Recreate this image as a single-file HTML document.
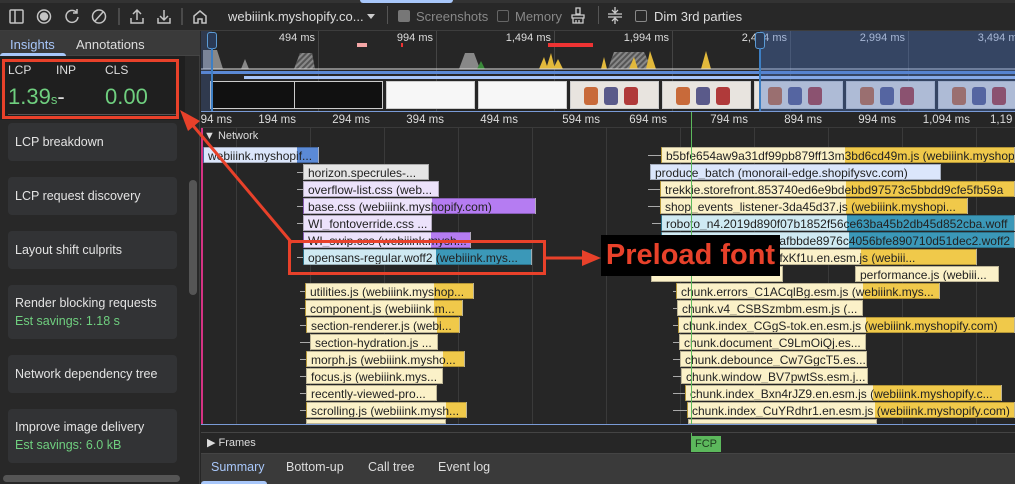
<!DOCTYPE html>
<html><head><meta charset="utf-8"><style>
*{margin:0;padding:0;box-sizing:border-box}
body{width:1015px;height:484px;overflow:hidden;background:#262626;font-family:"Liberation Sans",sans-serif;position:relative;color:#e3e3e3}
.a{position:absolute}
.t{font-size:13px;color:#ddd;white-space:nowrap}
.card{position:absolute;left:8px;width:169px;background:#323335;border-radius:4px}
.card span{position:absolute;left:7px;font-size:12.5px;color:#e3e3e3;white-space:nowrap}
.card .g{color:#6fcf7f}
.bar{position:absolute;height:16px;font-size:12px;line-height:16px;color:#222;white-space:nowrap;overflow:hidden;padding-left:4px;border:1px solid rgba(0,0,0,.25)}
.wh{position:absolute;height:1px;background:#aaa}
.lbl{position:absolute;font-size:11px;color:#ddd;white-space:nowrap;text-align:right}
.gl{position:absolute;width:1px;background:#3a3a3a}
.ss{position:absolute;top:81px;height:28px;width:89px;border:1px solid #ccc}
</style></head><body>
<!-- top toolbar -->
<div class="a" style="left:0;top:0;width:1015px;height:31px;background:#282828;border-bottom:1px solid #3d3d3d"></div>
<div class="a" style="left:0;top:0;width:1015px;height:3px;background:#333"></div>
<div class="a" style="left:360px;top:0;width:93px;height:3px;background:#a8c7fa;border-radius:0 0 3px 3px"></div>
<svg class="a" style="left:0;top:3px" width="215" height="28" fill="none" stroke="#c4c4c4" stroke-width="1.5">
<rect x="10" y="7" width="13" height="13" rx="1"/><line x1="15" y1="7" x2="15" y2="20"/>
<circle cx="44" cy="13.5" r="6.5"/><circle cx="44" cy="13.5" r="3.5" fill="#c4c4c4"/>
<path d="M77 10a6 6 0 1 0 1 4M77 6v4h-4"/>
<circle cx="99" cy="13.5" r="6.5"/><line x1="95" y1="18" x2="103" y2="9"/>
<line x1="119" y1="5" x2="119" y2="22" stroke="#555"/>
<path d="M131 15v5h12v-5M137 17V7M133 11l4-4 4 4"/>
<path d="M158 15v5h12v-5M164 7v10M160 13l4 4 4-4"/>
<line x1="182" y1="5" x2="182" y2="22" stroke="#555"/>
<path d="M194 20v-7l6-5 6 5v7h-4v-4h-4v4z"/>
</svg>
<div class="a t" style="left:228px;top:9px;color:#ddd">webiiink.myshopify.co...</div>
<div class="a" style="left:367px;top:14px;border:4px solid transparent;border-top:5px solid #ccc"></div>
<div class="a" style="left:387px;top:6px;width:1px;height:18px;background:#555"></div>
<div class="a" style="left:398px;top:10px;width:12px;height:12px;background:#777;border-radius:2px"></div>
<div class="a t" style="left:416px;top:9px;color:#888">Screenshots</div>
<div class="a" style="left:497px;top:10px;width:12px;height:12px;border:1px solid #666;border-radius:2px"></div>
<div class="a t" style="left:515px;top:9px;color:#888">Memory</div>
<svg class="a" style="left:570px;top:7px" width="16" height="17" fill="none" stroke="#ccc" stroke-width="1.3"><rect x="6" y="1" width="4" height="6"/><path d="M2 8h12v3H2zM3 11v5h10v-5M6 13v3M9 13v3"/></svg>
<div class="a" style="left:598px;top:6px;width:1px;height:18px;background:#555"></div>
<svg class="a" style="left:607px;top:6px" width="16" height="19" fill="none" stroke="#ccc" stroke-width="1.3"><path d="M1 8h14M1 11h14M8 1v5M5 4l3 3 3-3M8 18v-5M5 15l3-3 3 3"/></svg>
<div class="a" style="left:635px;top:10px;width:12px;height:12px;border:1px solid #888;border-radius:2px"></div>
<div class="a t" style="left:654px;top:9px">Dim 3rd parties</div>

<!-- left panel -->
<div class="a" style="left:0;top:31px;width:200px;height:453px;background:#282828;border-right:1px solid #3d3d3d"></div>
<div class="a" style="left:0;top:31px;width:200px;height:25px;background:#3a3a3a;border-bottom:1px solid #444"></div>
<div class="a t" style="left:10px;top:37px;color:#a8c7fa">Insights</div>
<div class="a" style="left:0;top:53px;width:66px;height:3px;background:#a8c7fa;border-radius:3px 3px 0 0"></div>
<div class="a t" style="left:76px;top:37px">Annotations</div>
<div class="a" style="left:0;top:56px;width:185px;height:64px;background:#1f1f1f"></div>
<div class="a t" style="left:8px;top:63px;font-size:12px">LCP</div>
<div class="a t" style="left:56px;top:63px;font-size:12px">INP</div>
<div class="a t" style="left:105px;top:63px;font-size:12px">CLS</div>
<div class="a" style="left:8px;top:84px;font-size:22px;color:#6fcf7f">1.39<span style="font-size:13px">s</span><span style="color:#ddd">-</span></div>
<div class="a" style="left:105px;top:84px;font-size:22px;color:#6fcf7f">0.00</div>
<div class="a" style="left:8px;top:114px;width:169px;height:1px;background:#555"></div>
<div class="a" style="left:2px;top:59px;width:177px;height:60px;border:3px solid #e8412a"></div>
<div class="card" style="top:123px;height:38px"><span style="top:12px">LCP breakdown</span></div>
<div class="card" style="top:177px;height:38px"><span style="top:12px">LCP request discovery</span></div>
<div class="card" style="top:231px;height:38px"><span style="top:12px">Layout shift culprits</span></div>
<div class="card" style="top:285px;height:54px"><span style="top:11px">Render blocking requests</span><span class="g" style="top:29px">Est savings: 1.18 s</span></div>
<div class="card" style="top:355px;height:38px"><span style="top:12px">Network dependency tree</span></div>
<div class="card" style="top:409px;height:54px"><span style="top:11px">Improve image delivery</span><span class="g" style="top:29px">Est savings: 6.0 kB</span></div>
<div class="a" style="left:189px;top:180px;width:8px;height:115px;background:#555;border-radius:4px"></div>
<div class="a" style="left:3px;top:475px;width:177px;height:7px;background:#555;border-radius:4px"></div>

<!-- overview -->
<div class="a" style="left:201px;top:31px;width:814px;height:80px;background:#262626"></div>
<div class="gl" style="left:318px;top:31px;height:80px;background:#444"></div>
<div class="gl" style="left:436px;top:31px;height:80px;background:#444"></div>
<div class="gl" style="left:554px;top:31px;height:80px;background:#444"></div>
<div class="gl" style="left:672px;top:31px;height:80px;background:#444"></div>
<div class="gl" style="left:790px;top:31px;height:80px;background:#444"></div>
<div class="gl" style="left:908px;top:31px;height:80px;background:#444"></div>
<div class="lbl" style="left:270px;top:32px;width:45px">494 ms</div>
<div class="lbl" style="left:388px;top:32px;width:45px">994 ms</div>
<div class="lbl" style="left:500px;top:32px;width:51px">1,494 ms</div>
<div class="lbl" style="left:618px;top:32px;width:51px">1,994 ms</div>
<div class="lbl" style="left:736px;top:32px;width:51px">2,494 ms</div>
<div class="lbl" style="left:854px;top:32px;width:51px">2,994 ms</div>
<div class="lbl" style="left:972px;top:32px;width:51px">3,494 ms</div>
<svg class="a" style="left:201px;top:44px" width="814" height="26">
<path d="M2 25V6h14l6 19zM40 25l4-10 4 10zM93 25l6-16h12l3 16zM258 25l6-16h9l6 16zM407 25l6-17h30l8 17z" fill="#888"/>
<path d="M93 25l6-16h12l3 16zM407 25l6-17h30l8 17z" fill="url(#h)"/>
<path d="M338 25l5-12 4 12zM345 25l5-16 4 16zM352 25l5-10 5 10zM400 25l3-12 3 12zM428 25l5-12 4 12zM445 25l4-18 6 18zM500 25l5-18 5 18z" fill="#e2b93b"/>
<path d="M276 25l4-8 4 8z" fill="#3a8a3a"/>
<line x1="0" y1="25" x2="814" y2="25" stroke="#ddd" stroke-width="1"/>
<defs><pattern id="h" width="4" height="4" patternUnits="userSpaceOnUse" patternTransform="rotate(45)"><rect width="2" height="4" fill="#555"/></pattern></defs>
</svg>
<div class="a" style="left:357px;top:43px;width:10px;height:4px;background:#f4a6a6"></div>
<div class="a" style="left:401px;top:43px;width:2px;height:4px;background:#e33"></div>
<div class="a" style="left:548px;top:43px;width:45px;height:4px;background:#e33"></div>
<div class="a" style="left:201px;top:71px;width:814px;height:3px;background:#5b8ad6"></div>
<div class="a" style="left:244px;top:76px;width:771px;height:3px;background:#a8c7fa"></div>
<div class="ss" style="left:210px;background:#111"></div>
<div class="ss" style="left:294px;background:#111;width:89px"></div>
<div class="ss" style="left:386px;background:#f7f7f7"></div>
<div class="ss" style="left:478px;background:#f7f7f7"></div>
<div class="ss" style="left:570px;background:#e8e4df"></div>
<div class="ss" style="left:662px;background:#e8e4df"></div>
<div class="ss" style="left:754px;background:#e8e4df"></div>
<div class="ss" style="left:846px;background:#e8e4df"></div>
<div class="ss" style="left:938px;background:#e8e4df"></div>
<svg class="a" style="left:570px;top:83px" width="445" height="24">
<g id="p"><rect x="14" y="4" width="14" height="18" rx="3" fill="#c86a3a"/><rect x="34" y="4" width="14" height="18" rx="3" fill="#5a5a8a"/><rect x="54" y="4" width="14" height="18" rx="3" fill="#b03a3a"/></g>
<use href="#p" x="92"/><use href="#p" x="184"/><use href="#p" x="276"/><use href="#p" x="368"/>
</svg>
<div class="a" style="left:760px;top:31px;width:255px;height:80px;background:rgba(80,120,200,.38)"></div>
<div class="a" style="left:201px;top:31px;width:11px;height:80px;background:rgba(80,120,200,.25)"></div>
<div class="a" style="left:207px;top:32px;width:10px;height:17px;border:1px solid #5b9bd5;border-radius:3px;background:#2a3a55"></div>
<div class="a" style="left:211px;top:48px;width:2px;height:63px;background:#3d7fc4"></div>
<div class="a" style="left:755px;top:32px;width:10px;height:17px;border:1px solid #5b9bd5;border-radius:3px;background:#2a3a55"></div>
<div class="a" style="left:759px;top:48px;width:2px;height:63px;background:#3d7fc4"></div>
<div class="a" style="left:201px;top:111px;width:814px;height:1px;background:#7a9bd6"></div>

<!-- ruler -->
<div class="a" style="left:201px;top:112px;width:814px;height:16px;background:#262626;border-bottom:1px solid #3a3a3a"></div>
<div class="lbl" style="left:190px;top:114px;width:42px;font-size:11.5px">94 ms</div>
<div class="lbl" style="left:250px;top:114px;width:46px;font-size:11.5px">194 ms</div>
<div class="lbl" style="left:324px;top:114px;width:46px;font-size:11.5px">294 ms</div>
<div class="lbl" style="left:398px;top:114px;width:46px;font-size:11.5px">394 ms</div>
<div class="lbl" style="left:472px;top:114px;width:46px;font-size:11.5px">494 ms</div>
<div class="lbl" style="left:554px;top:114px;width:46px;font-size:11.5px">594 ms</div>
<div class="lbl" style="left:621px;top:114px;width:46px;font-size:11.5px">694 ms</div>
<div class="lbl" style="left:702px;top:114px;width:46px;font-size:11.5px">794 ms</div>
<div class="lbl" style="left:776px;top:114px;width:46px;font-size:11.5px">894 ms</div>
<div class="lbl" style="left:850px;top:114px;width:46px;font-size:11.5px">994 ms</div>
<div class="lbl" style="left:915px;top:114px;width:55px;font-size:11.5px">1,094 ms</div>
<div class="lbl" style="left:990px;top:114px;width:40px;font-size:11.5px;text-align:left">1,19</div>

<!-- grid lines network -->
<div class="gl" style="left:236px;top:128px;height:297px"></div>
<div class="gl" style="left:310px;top:128px;height:297px"></div>
<div class="gl" style="left:384px;top:128px;height:297px"></div>
<div class="gl" style="left:458px;top:128px;height:297px"></div>
<div class="gl" style="left:532px;top:128px;height:297px"></div>
<div class="gl" style="left:606px;top:128px;height:297px"></div>
<div class="gl" style="left:680px;top:128px;height:297px"></div>
<div class="gl" style="left:754px;top:128px;height:297px"></div>
<div class="gl" style="left:828px;top:128px;height:297px"></div>
<div class="gl" style="left:902px;top:128px;height:297px"></div>
<div class="gl" style="left:976px;top:128px;height:297px"></div>
<div class="a" style="left:201px;top:128px;width:2px;height:296px;background:#d63384"></div>
<div class="a" style="left:204px;top:130px;font-size:11px;color:#ddd">▼ Network</div>

<!-- left bars -->
<div class="bar" style="left:203px;top:147px;width:116px;background:linear-gradient(90deg,#dbe6fb 0 93px,#5b8ad6 93px)">webiiink.myshopif...</div>
<div class="wh" style="left:297px;top:172px;width:7px"></div><div class="bar" style="left:303px;top:164px;width:126px;background:#e5e5e5">horizon.specrules-...</div>
<div class="wh" style="left:297px;top:189px;width:7px"></div><div class="bar" style="left:303px;top:181px;width:136px;background:#ece2fb">overflow-list.css (web...</div>
<div class="wh" style="left:297px;top:206px;width:7px"></div><div class="bar" style="left:303px;top:198px;width:233px;background:linear-gradient(90deg,#ece2fb 0 128px,#b57cf2 128px)">base.css (webiiink.myshopify.com)</div>
<div class="wh" style="left:297px;top:223px;width:7px"></div><div class="bar" style="left:303px;top:215px;width:129px;background:#ece2fb">WI_fontoverride.css ...</div>
<div class="wh" style="left:297px;top:240px;width:7px"></div><div class="bar" style="left:303px;top:232px;width:168px;background:linear-gradient(90deg,#ece2fb 0 127px,#b57cf2 127px)">WI_swip.css (webiiink.mysh...</div>
<div class="wh" style="left:297px;top:257px;width:7px"></div><div class="bar" style="left:303px;top:249px;width:229px;background:linear-gradient(90deg,#cfeaf3 0 132px,#3b98b8 132px)">opensans-regular.woff2 (webiiink.mys...</div>
<div class="wh" style="left:300px;top:291px;width:6px"></div><div class="bar" style="left:305px;top:283px;width:169px;background:linear-gradient(90deg,#fbf1c8 0 128px,#f0c94a 128px)">utilities.js (webiiink.myshop...</div>
<div class="wh" style="left:300px;top:308px;width:6px"></div><div class="bar" style="left:305px;top:300px;width:158px;background:linear-gradient(90deg,#fbf1c8 0 128px,#f0c94a 128px)">component.js (webiiink.m...</div>
<div class="wh" style="left:300px;top:325px;width:6px"></div><div class="bar" style="left:306px;top:317px;width:154px;background:linear-gradient(90deg,#fbf1c8 0 130px,#f0c94a 130px)">section-renderer.js (webi...</div>
<div class="wh" style="left:300px;top:342px;width:10px"></div><div class="bar" style="left:310px;top:334px;width:128px;background:#fbf1c8">section-hydration.js ...</div>
<div class="wh" style="left:300px;top:359px;width:6px"></div><div class="bar" style="left:306px;top:351px;width:159px;background:linear-gradient(90deg,#fbf1c8 0 136px,#f0c94a 136px)">morph.js (webiiink.mysho...</div>
<div class="wh" style="left:300px;top:376px;width:6px"></div><div class="bar" style="left:306px;top:368px;width:137px;background:#fbf1c8">focus.js (webiiink.mys...</div>
<div class="wh" style="left:300px;top:393px;width:6px"></div><div class="bar" style="left:306px;top:385px;width:131px;background:#fbf1c8">recently-viewed-pro...</div>
<div class="wh" style="left:300px;top:410px;width:6px"></div><div class="bar" style="left:306px;top:402px;width:161px;background:linear-gradient(90deg,#fbf1c8 0 139px,#f0c94a 139px)">scrolling.js (webiiink.mysh...</div>
<div class="wh" style="left:300px;top:427px;width:6px"></div><div class="bar" style="left:306px;top:419px;width:140px;height:5px;background:#fbf1c8"></div>

<!-- right bars -->
<div class="wh" style="left:648px;top:155px;width:13px"></div><div class="bar" style="left:661px;top:147px;width:354px;background:linear-gradient(90deg,#fbf1c8 0 183px,#f0c94a 183px)">b5bfe654aw9a31df99pb879ff13m3bd6cd49m.js (webiiink.myshop</div>
<div class="bar" style="left:650px;top:164px;width:291px;background:#dbe6fb">produce_batch (monorail-edge.shopifysvc.com)</div>
<div class="wh" style="left:648px;top:189px;width:13px"></div><div class="bar" style="left:660px;top:181px;width:355px;background:linear-gradient(90deg,#fbf1c8 0 185px,#f0c94a 185px)">trekkie.storefront.853740ed6e9bdebbd97573c5bbdd9cfe5fb59a</div>
<div class="wh" style="left:648px;top:206px;width:13px"></div><div class="bar" style="left:660px;top:198px;width:308px;background:linear-gradient(90deg,#fbf1c8 0 185px,#f0c94a 185px)">shop_events_listener-3da45d37.js (webiiink.myshopi...</div>
<div class="wh" style="left:652px;top:223px;width:9px"></div><div class="bar" style="left:661px;top:215px;width:354px;background:linear-gradient(90deg,#cfeaf3 0 185px,#3b98b8 185px)">roboto_n4.2019d890f07b1852f56ce63ba45b2db45d852cba.woff</div>
<div class="bar" style="left:661px;top:232px;width:354px;background:linear-gradient(90deg,#cfeaf3 0 187px,#3b98b8 187px)">roboto_n7.9f9ac48a9afbbde8976c4056bfe890710d51dec2.woff2</div>
<div class="bar" style="left:655px;top:249px;width:322px;background:linear-gradient(90deg,#fbf1c8 0 205px,#f0c94a 205px)">----------------button_CpfxKf1u.en.esm.js (webiii...</div>
<div class="bar" style="left:855px;top:266px;width:144px;background:#fbf1c8">performance.js (webiii...</div>
<div class="bar" style="left:651px;top:266px;width:132px;background:#fbf1c8"></div>
<div class="wh" style="left:673px;top:291px;width:4px"></div><div class="bar" style="left:676px;top:283px;width:264px;background:linear-gradient(90deg,#fbf1c8 0 186px,#f0c94a 186px)">chunk.errors_C1ACqlBg.esm.js (webiiink.mys...</div>
<div class="wh" style="left:673px;top:308px;width:4px"></div><div class="bar" style="left:677px;top:300px;width:186px;background:#fbf1c8">chunk.v4_CSBSzmbm.esm.js (...</div>
<div class="wh" style="left:673px;top:325px;width:5px"></div><div class="bar" style="left:678px;top:317px;width:337px;background:linear-gradient(90deg,#fbf1c8 0 187px,#f0c94a 187px)">chunk.index_CGgS-tok.en.esm.js (webiiink.myshopify.com)</div>
<div class="wh" style="left:673px;top:342px;width:6px"></div><div class="bar" style="left:679px;top:334px;width:187px;background:#fbf1c8">chunk.document_C9LmOiQj.es...</div>
<div class="wh" style="left:673px;top:359px;width:7px"></div><div class="bar" style="left:680px;top:351px;width:187px;background:#fbf1c8">chunk.debounce_Cw7GgcT5.es...</div>
<div class="wh" style="left:673px;top:376px;width:8px"></div><div class="bar" style="left:681px;top:368px;width:187px;background:#fbf1c8">chunk.window_BV7pwtSs.esm.j...</div>
<div class="wh" style="left:673px;top:393px;width:12px"></div><div class="bar" style="left:685px;top:385px;width:317px;background:linear-gradient(90deg,#fbf1c8 0 187px,#f0c94a 187px)">chunk.index_Bxn4rJZ9.en.esm.js (webiiink.myshopify.c...</div>
<div class="wh" style="left:673px;top:410px;width:14px"></div><div class="bar" style="left:687px;top:402px;width:328px;background:linear-gradient(90deg,#fbf1c8 0 187px,#f0c94a 187px)">chunk.index_CuYRdhr1.en.esm.js (webiiink.myshopify.com)</div>
<div class="bar" style="left:688px;top:419px;width:189px;height:5px;background:#fbf1c8"></div>

<!-- FCP line -->
<div class="a" style="left:691px;top:112px;width:1px;height:340px;background:#5cb85c"></div>
<div class="a" style="left:201px;top:424px;width:814px;height:1px;background:#7a9bd6"></div>
<div class="a" style="left:201px;top:425px;width:814px;height:8px;background:#262626;border-bottom:1px solid #444"></div>
<div class="a" style="left:207px;top:436px;font-size:11px;color:#ddd">▶ Frames</div>
<div class="a" style="left:691px;top:436px;width:30px;height:16px;background:#5cb85c;color:#1e3a1e;font-size:11px;line-height:16px;text-align:center">FCP</div>

<!-- bottom tabs -->
<div class="a" style="left:201px;top:453px;width:814px;height:31px;background:#3a3a3a;border-top:1px solid #444"></div>
<div class="a t" style="left:211px;top:460px;color:#a8c7fa;font-size:12.5px">Summary</div>
<div class="a" style="left:201px;top:481px;width:66px;height:3px;background:#a8c7fa;border-radius:3px 3px 0 0"></div>
<div class="a t" style="left:286px;top:460px;font-size:12.5px">Bottom-up</div>
<div class="a t" style="left:368px;top:460px;font-size:12.5px">Call tree</div>
<div class="a t" style="left:438px;top:460px;font-size:12.5px">Event log</div>

<!-- annotations -->
<div class="a" style="left:288px;top:240px;width:258px;height:35px;border:3px solid #e8412a"></div>
<svg class="a" style="left:0;top:0" width="1015" height="484">
<line x1="292" y1="243" x2="190" y2="122" stroke="#e8412a" stroke-width="3"/>
<polygon points="180,110 200,121 188,131" fill="#e8412a"/>
<line x1="546" y1="258" x2="585" y2="258" stroke="#e8412a" stroke-width="3"/>
<polygon points="601,258 582,250 582,266" fill="#e8412a"/>
</svg>
<div class="a" style="left:601px;top:235px;width:179px;height:41px;background:#000;color:#e8412a;font-weight:bold;font-size:29px;line-height:41px;text-align:center;white-space:nowrap">Preload font</div>
</body></html>
